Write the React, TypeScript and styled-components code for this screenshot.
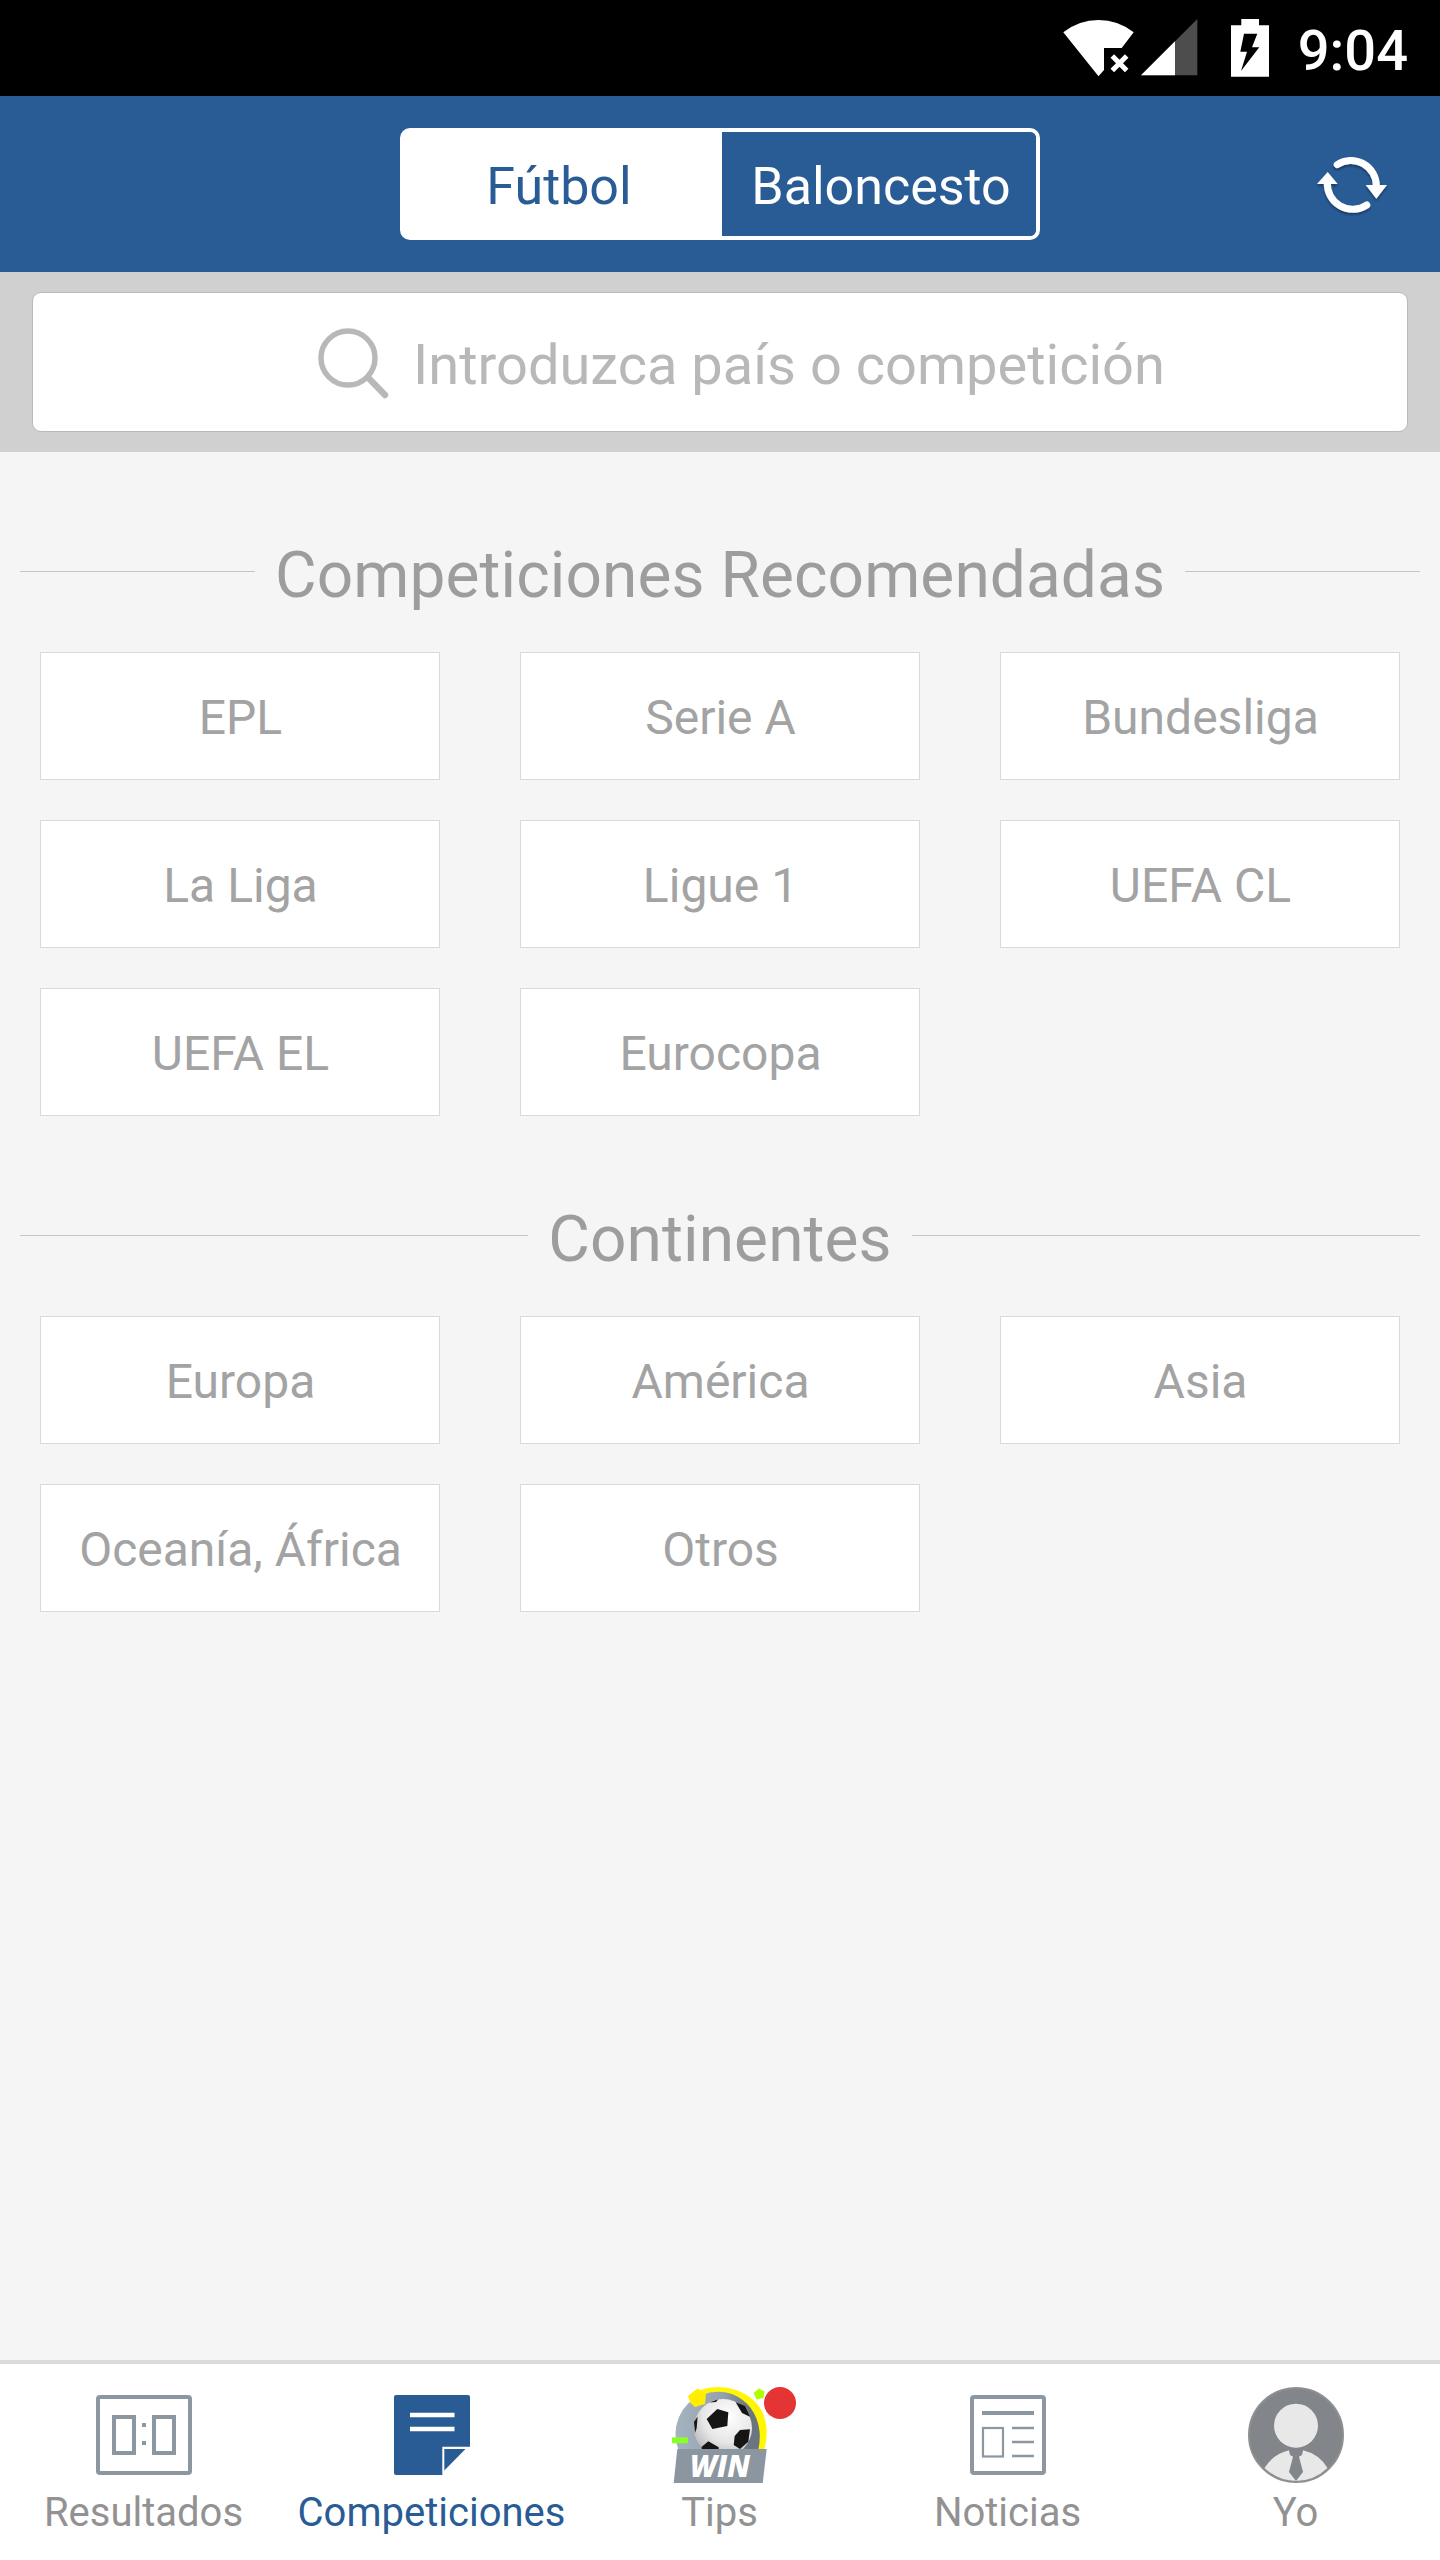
import React from 'react';
import styled, { createGlobalStyle } from 'styled-components';

const GlobalStyle = createGlobalStyle`
  * { box-sizing: border-box; }
  body {
    margin: 0;
    font-family: Roboto, "Noto Sans", sans-serif;
    background: #f5f5f5;
  }
  button { font: inherit; border: 0; margin: 0; padding: 0; background: none; }
  svg { display: block; flex: none; overflow: visible; }
`;

const Screen = styled.div`
  width: 1440px;
  height: 2560px;
  display: flex;
  flex-direction: column;
  background: #f5f5f5;
  overflow: hidden;
`;

const StatusBar = styled.div`
  height: 96px;
  flex: none;
  display: flex;
  justify-content: flex-end;
  padding-right: 32px;
  background: #000;
`;

const Clock = styled.span`
  margin-left: 26px;
  padding-top: 6px;
  line-height: 90px;
  font-size: 56px;
  font-weight: 500;
  color: #fff;
`;

const Header = styled.header`
  height: 176px;
  flex: none;
  display: grid;
  grid-template-columns: 1fr 640px 1fr;
  align-items: center;
  background: #295c95;
`;

const Segmented = styled.div`
  grid-column: 2;
  height: 112px;
  display: grid;
  grid-template-columns: 318px 1fr;
  border: 4px solid #fff;
  border-radius: 10px;
`;

const Segment = styled.button<{ $active?: boolean }>`
  padding: ${p => (p.$active ? '5px 8px 0 0' : '5px 0 0 4px')};
  font-size: 52px;
  line-height: 99px;
  border-radius: ${p => (p.$active ? '0' : '0 6px 6px 0')};
  color: ${p => (p.$active ? '#295c95' : '#fff')};
  background: ${p => (p.$active ? '#fff' : '#295c95')};
`;

const RefreshButton = styled.button`
  justify-self: end;
  margin-right: 48px;
`;

const SearchPanel = styled.div`
  height: 180px;
  flex: none;
  padding: 20px 32px;
  background: #d0d0d0;
`;

const SearchField = styled.div`
  height: 140px;
  display: flex;
  align-items: center;
  justify-content: center;
  gap: 24px;
  padding-left: 42px;
  border: 1px solid #bababa;
  border-radius: 9px;
  background: #fff;
`;

const Placeholder = styled.span`
  padding-top: 5px;
  font-size: 56px;
  line-height: 66px;
  color: #b8b8b8;
`;

const Content = styled.main`
  flex: 1;
  padding-top: 79px;
`;

const Section = styled.section`
  margin-bottom: 79px;
`;

const SectionTitle = styled.h2`
  display: flex;
  align-items: center;
  gap: 20px;
  height: 81px;
  margin: 0 20px 40px;
  font-size: 64px;
  font-weight: 400;
  line-height: 73px;
  letter-spacing: 0.08px;
  color: #9d9d9d;

  &::before,
  &::after {
    content: '';
    flex: 1;
    height: 1px;
    background: #c6c6c6;
  }
`;

const TitleText = styled.span`
  padding-top: 8px;
`;

const CellGrid = styled.div`
  display: grid;
  grid-template-columns: repeat(3, 400px);
  gap: 40px 80px;
  padding: 0 40px;
`;

const Cell = styled.button`
  height: 128px;
  padding: 3px 0 0 1px;
  border: 1px solid #dadada;
  background: #fff;
  font-size: 48px;
  color: #a3a3a3;
`;

const TabBar = styled.nav`
  height: 200px;
  flex: none;
  display: grid;
  grid-template-columns: repeat(5, 1fr);
  border-top: 4px solid #dbdbdb;
  background: #fff;
`;

const Tab = styled.button<{ $active?: boolean }>`
  display: flex;
  flex-direction: column;
  align-items: center;
  padding-top: 23px;
  font-size: 40px;
  line-height: 48px;
  color: ${p => (p.$active ? '#295c95' : '#929292')};
`;

const IconSlot = styled.span`
  position: relative;
  height: 96px;
  margin-bottom: 6px;
`;

const TabLabel = styled.span`
  padding-right: 1px;
`;

const Badge = styled.span`
  position: absolute;
  left: 92px;
  top: 0;
  width: 32px;
  height: 32px;
  border-radius: 50%;
  background: #e53434;
`;

const StatusIcons = () => (
  <svg width="212" height="96" viewBox="1060 0 212 96" fill="#fff">
    <path d="M1063.3 32.3Q1079 20 1098.5 20T1133.7 32.3L1121.7 48H1104V70L1098.5 76.3Z" />
    <path d="M1112.3 56L1126.7 70.6M1126.7 56L1112.3 70.6" stroke="#fff" strokeWidth="5" />
    <path d="M1141 75.3L1197.3 19V75.3Z" fill="#4d4d4d" />
    <path d="M1141 75.3L1175 41.3V75.3Z" />
    <path d="M1231 25.3H1241.3V19H1259V25.3H1269V76.7H1231Z" />
    <path d="M1244 33.7H1257.3L1252 47.3H1259.3L1241 71L1247 51.7H1240.3Z" fill="#000" />
  </svg>
);

const RefreshIcon = () => (
  <svg width="80" height="80" viewBox="0 0 80 80">
    <defs>
      <filter id="drop" x="-20%" y="-20%" width="140%" height="140%">
        <feDropShadow dx="0" dy="2" stdDeviation="1.2" floodColor="#0d2c50" floodOpacity="0.7" />
      </filter>
    </defs>
    <g filter="url(#drop)">
      <g fill="none" stroke="#fff" strokeWidth="7" strokeLinecap="round">
        <path d="M25.2 20.6A25.4 25.4 0 0 1 64.4 42" />
        <path d="M15.4 38A25.4 25.4 0 0 0 54.8 61" />
      </g>
      <path d="M53.7 41H75L64.3 54.7ZM5 40H25.7L15.7 28Z" fill="#fff" />
    </g>
  </svg>
);

const SearchIcon = () => (
  <svg width="72" height="72" viewBox="0 0 72 72" fill="none" stroke="#b8b8b8">
    <circle cx="31" cy="32" r="27" strokeWidth="5.5" />
    <path d="M51.5 52L68 69" strokeWidth="6.5" strokeLinecap="round" />
  </svg>
);

const ScoreIcon = () => (
  <svg width="96" height="96" viewBox="0 0 96 96" fill="none" stroke="#8c97a2" strokeWidth="4">
    <rect x="2" y="10" width="92" height="76" rx="2" />
    <rect x="18" y="30" width="20" height="36" />
    <rect x="58" y="30" width="20" height="36" />
    <path d="M46 38H50M46 56H50" />
  </svg>
);

const NoteIcon = () => (
  <svg width="96" height="96" viewBox="0 0 96 96" fill="#295c95">
    <path d="M12 8H84Q86 8 86 10V59.7H58.3V88H12Q10 88 10 86V10Q10 8 12 8Z" />
    <path d="M60.3 62H81.5L60.3 83.5Z" />
    <path d="M26 28H70.5M26 42H70.5" stroke="#fff" strokeWidth="4.6" />
  </svg>
);

const WinIcon = () => (
  <svg width="96" height="96" viewBox="0 0 96 96">
    <defs>
      <linearGradient id="dome" x1="0" x2="1">
        <stop offset="0" stopColor="#a5b2bf" />
        <stop offset="0.55" stopColor="#94a1ae" />
        <stop offset="0.85" stopColor="#6a7580" />
      </linearGradient>
      <radialGradient id="ball" cx="0.6" cy="0.3" r="0.75">
        <stop offset="0" stopColor="#fff" />
        <stop offset="0.6" stopColor="#e6e6e6" />
        <stop offset="1" stopColor="#b5b5b5" />
      </radialGradient>
      <clipPath id="aboveBase">
        <rect width="96" height="62" />
      </clipPath>
    </defs>
    <g clipPath="url(#aboveBase)">
      <circle cx="46.5" cy="47" r="43" fill="url(#dome)" />
      <path
        d="M28 3Q46 -3 64 3Q94 14 94.700 45Q94.700 54 92 64H86Q88.500 54 87.500 44Q84 17 60 7Q44 2 30 8Z"
        fill="#fff600"
      />
      <circle cx="51" cy="41" r="29" fill="url(#ball)" />
      <g fill="#151515">
        <path d="M34.7 32L45.3 22L56.3 25.3L55.3 39L40.3 42Z" />
        <path d="M63.7 15.3L73 19L78 29.7L70 26Z" />
        <path d="M68 43L78 42.3L76.3 54.7L68 62L61.7 58L62.7 49Z" />
        <path d="M29.5 60L36.3 54.3L46.7 60.3V63H30Z" />
        <path d="M22 35L25.6 29.5L24.7 41L23 46Z" />
        <path d="M37.5 15.5L46.3 12.2L44 15Z" />
      </g>
    </g>
    <path d="M5.3 62H94.7L90.7 96H1.7Z" fill="#8b96a1" />
    <path d="M16 9L25.5 1.5L34 6.5L33 17L23 20L18.5 16Z" fill="#ffee00" />
    <path d="M81.5 6L87 1.5L92.7 4.5L91.5 11L84.5 12.5Z" fill="#b0ff00" />
    <rect y="50.3" width="16" height="6" fill="#8cff2a" />
    <text
      x="18"
      y="90"
      textLength="60"
      lengthAdjust="spacingAndGlyphs"
      fontFamily="'Open Sans', 'Noto Sans', sans-serif"
      fontSize="30"
      fontWeight="800"
      fontStyle="italic"
      fill="#fff"
    >
      WIN
    </text>
  </svg>
);

const NewsIcon = () => (
  <svg width="96" height="96" viewBox="0 0 96 96" fill="none" stroke="#8c97a2">
    <rect x="12" y="10" width="72" height="76" rx="2" strokeWidth="4" />
    <path d="M22 26H74" strokeWidth="4" />
    <rect x="23" y="41" width="20" height="28.5" strokeWidth="2.2" />
    <path d="M52 41H74M52 55H74M52 69H74" strokeWidth="2.4" />
  </svg>
);

const ProfileIcon = () => (
  <svg width="96" height="96" viewBox="0 0 96 96">
    <circle cx="48" cy="48" r="47" fill="#82868b" stroke="#8f8f8f" strokeWidth="2" />
    <circle cx="48" cy="38.7" r="22" fill="#e8e8e8" />
    <path
      d="M16.5 81Q25 67 41 63.3L42 68L45 69.7L41 85L48 94L55 85L51 69.7L54 68L55 63.3Q71 67 79.5 81Q66 94 48 94Q30 94 16.5 81Z"
      fill="#e8e8e8"
    />
  </svg>
);

const recommended = ['EPL', 'Serie A', 'Bundesliga', 'La Liga', 'Ligue 1', 'UEFA CL', 'UEFA EL', 'Eurocopa'];
const continents = ['Europa', 'América', 'Asia', 'Oceanía, África', 'Otros'];

const tabs = [
  { label: 'Resultados', Icon: ScoreIcon },
  { label: 'Competiciones', Icon: NoteIcon, active: true },
  { label: 'Tips', Icon: WinIcon, badge: true },
  { label: 'Noticias', Icon: NewsIcon },
  { label: 'Yo', Icon: ProfileIcon },
];

const CompetitionSection = ({ title, items }: { title: string; items: string[] }) => (
  <Section>
    <SectionTitle>
      <TitleText>{title}</TitleText>
    </SectionTitle>
    <CellGrid>
      {items.map(item => (
        <Cell key={item}>{item}</Cell>
      ))}
    </CellGrid>
  </Section>
);

export default function App() {
  return (
    <Screen>
      <GlobalStyle />
      <StatusBar>
        <StatusIcons />
        <Clock>9:04</Clock>
      </StatusBar>
      <Header>
        <Segmented>
          <Segment $active>Fútbol</Segment>
          <Segment>Baloncesto</Segment>
        </Segmented>
        <RefreshButton aria-label="Actualizar">
          <RefreshIcon />
        </RefreshButton>
      </Header>
      <SearchPanel>
        <SearchField>
          <SearchIcon />
          <Placeholder>Introduzca país o competición</Placeholder>
        </SearchField>
      </SearchPanel>
      <Content>
        <CompetitionSection title="Competiciones Recomendadas" items={recommended} />
        <CompetitionSection title="Continentes" items={continents} />
      </Content>
      <TabBar>
        {tabs.map(({ label, Icon, active, badge }) => (
          <Tab key={label} $active={active}>
            <IconSlot>
              <Icon />
              {badge && <Badge />}
            </IconSlot>
            <TabLabel>{label}</TabLabel>
          </Tab>
        ))}
      </TabBar>
    </Screen>
  );
}
